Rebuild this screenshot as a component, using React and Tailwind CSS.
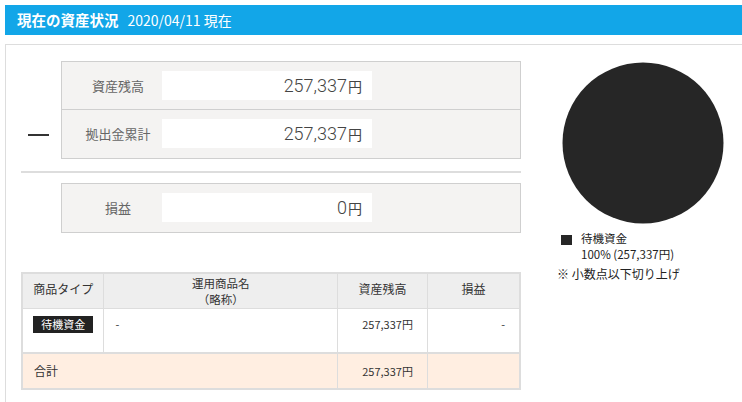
import React from 'react';

// 現在の資産状況 panel
const jp = "font-['Noto_Sans_CJK_JP','Noto_Sans',sans-serif]";

const ValueRow = ({ label, value, last }) => (
  <div className={`flex h-[48px] items-start ${last ? '' : 'border-b border-[#cfcfcf]'}`}>
    <div className="w-[100px] pl-[12px] pt-[14px] text-center text-[13px] leading-[20px] text-[#666]">{label}</div>
    <div className="mt-[9px] flex h-[29px] w-[210px] items-center justify-end bg-white pr-[10px] text-[#444]">
      <span className="font-['Roboto',sans-serif] text-[18px] font-light leading-none">{value}</span>
      <span className="ml-[1px] text-[14px] leading-none">円</span>
    </div>
  </div>
);

const App = () => {
  return (
    <div className={`relative h-[402px] w-[742px] overflow-hidden bg-white ${jp}`}>
      <div className="ml-[5px] mt-[5px] flex h-[30px] w-[760px] items-center bg-[#12a6e8] pl-[12px] text-white">
        <span className="text-[14.5px] font-bold">現在の資産状況</span>
        <span className="ml-[9px] text-[14px]">2020/04/11 現在</span>
      </div>

      <div className="ml-[5px] mt-[9px] flex h-[420px] w-[760px] border border-[#ddd] pl-[15px] pt-[16px]">
        {/* left column */}
        <div className="flex w-[500px] flex-col">
          <div className="flex">
            <div className="flex w-[40px] items-end pb-[23px] pl-[7px]">
              <div className="h-[2px] w-[21px] bg-[#333]" />
            </div>
            <div className="w-[460px] border border-[#cfcfcf] bg-[#f4f3f2]">
              <ValueRow label="資産残高" value="257,337" />
              <ValueRow label="拠出金累計" value="257,337" last />
            </div>
          </div>

          <div className="mt-[12px] h-[2px] w-[500px] bg-[#ddd]" />

          <div className="ml-[40px] mt-[10px] w-[460px] border border-[#cfcfcf] bg-[#f4f3f2]">
            <ValueRow label="損益" value="0" last />
          </div>

          <table className="mt-[39px] w-[500px] border-collapse border-2 border-[#ddd] text-[12px] text-[#333]">
            <thead>
              <tr className="h-[35px] bg-[#eee]">
                <th className="w-[82px] border border-[#ddd] pb-[4px] font-normal leading-[14px]">商品タイプ</th>
                <th className="w-[235px] border border-[#ddd] text-[11.5px] font-normal leading-[16px]">運用商品名<br />（略称）</th>
                <th className="w-[90px] border border-[#ddd] pb-[4px] font-normal leading-[14px]">資産残高</th>
                <th className="w-[93px] border border-[#ddd] pb-[4px] font-normal leading-[14px]">損益</th>
              </tr>
            </thead>
            <tbody>
              <tr className="h-[45px] border-b-2 border-[#ddd] align-top">
                <td className="border border-[#ddd] pt-[7px]">
                  <div className="mx-auto flex h-[17px] w-[60px] items-center justify-center bg-[#222] text-[11px] text-white">待機資金</div>
                </td>
                <td className="border border-[#ddd] pl-[11px] pt-[7px] text-[11px]">-</td>
                <td className="border border-[#ddd] pr-[14px] pt-[7px] text-right text-[11px]">257,337円</td>
                <td className="border border-[#ddd] pr-[14px] pt-[7px] text-right text-[11px]">-</td>
              </tr>
              <tr className="h-[36px] bg-[#ffeee1]">
                <td colSpan={2} className="border border-[#ddd] pl-[11px]">合計</td>
                <td className="border border-[#ddd] pr-[14px] text-right text-[11px]">257,337円</td>
                <td className="border border-[#ddd]" />
              </tr>
            </tbody>
          </table>
        </div>

        {/* right column: chart */}
        <div className="ml-[36px] flex flex-col">
          <svg width="162" height="162" viewBox="0 0 162 162" className="mt-[1px] ml-[5px]">
            <circle cx="81" cy="81" r="80.5" fill="#262626" />
          </svg>
          <div className="mt-[6px] flex items-start pl-[4px]">
            <div className="mt-[5px] h-[10px] w-[11px] bg-[#262626]" />
            <div className="ml-[9px] text-[11.5px] leading-[16px] text-[#222]">
              <div>待機資金</div>
              <div>100% (257,337円)</div>
            </div>
          </div>
          <div className="mt-[4px] text-[12px] leading-[16px] text-[#222]">※ 小数点以下切り上げ</div>
        </div>
      </div>
    </div>
  );
};

export default App;
